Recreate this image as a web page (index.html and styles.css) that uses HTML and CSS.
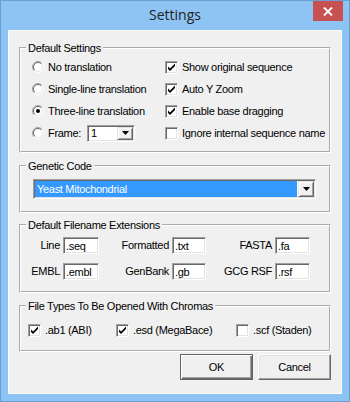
FILE: index.html
```html
<!DOCTYPE html>
<html lang="en">
<head>
    <meta charset="UTF-8">
    <title>Settings</title>
    <link rel="stylesheet" href="styles.css">
</head>
<body>
    <svg class="defs" width="0" height="0">
        <symbol id="radio" viewBox="0 0 12 12">
            <circle cx="6" cy="6" r="5" fill="#fff"/>
            <path d="M2.1 9.9 A5.5 5.5 0 0 1 9.9 2.1" fill="none" stroke="#a0a0a0"/>
            <path d="M9.9 2.1 A5.5 5.5 0 0 1 2.1 9.9" fill="none" stroke="#fff"/>
            <path d="M2.8 9.2 A4.5 4.5 0 0 1 9.2 2.8" fill="none" stroke="#696969"/>
            <path d="M9.2 2.8 A4.5 4.5 0 0 1 2.8 9.2" fill="none" stroke="#e3e3e3"/>
        </symbol>
        <symbol id="tick" viewBox="0 0 13 13">
            <polygon points="3,5.5 5,7.5 10,2.5 10,5 5,10 3,8" fill="#000"/>
        </symbol>
        <symbol id="arrow" viewBox="0 0 7 4">
            <polygon points="0,0 7,0 3.5,4" fill="#000"/>
        </symbol>
    </svg>

    <div class="window">
        <div class="titlebar">
            <span class="title">Settings</span>
            <span class="close">
                <svg width="10" height="9" viewBox="0 0 10 9"><path d="M1 0.5 L9 8.5 M9 0.5 L1 8.5" stroke="#fff" stroke-width="1.8"/></svg>
            </span>
        </div>

        <div class="client">
            <fieldset class="group">
                <legend>Default Settings</legend>
                <div class="defaults">
                    <div class="opt"><span class="radio"><svg><use href="#radio"/></svg></span>No translation</div>
                    <div class="opt"><span class="check"><svg><use href="#tick"/></svg></span>Show original sequence</div>
                    <div class="opt"><span class="radio"><svg><use href="#radio"/></svg></span>Single-line translation</div>
                    <div class="opt"><span class="check"><svg><use href="#tick"/></svg></span>Auto Y Zoom</div>
                    <div class="opt"><span class="radio on"><svg><use href="#radio"/></svg></span>Three-line translation</div>
                    <div class="opt"><span class="check"><svg><use href="#tick"/></svg></span>Enable base dragging</div>
                    <div class="opt">
                        <span class="radio"><svg><use href="#radio"/></svg></span>Frame:
                        <span class="combo sunken frame">
                            <span class="value">1</span>
                            <span class="drop"><svg><use href="#arrow"/></svg></span>
                        </span>
                    </div>
                    <div class="opt"><span class="check"></span>Ignore internal sequence name</div>
                </div>
            </fieldset>

            <fieldset class="group code-group">
                <legend>Genetic Code</legend>
                <div class="code">
                    <span class="combo sunken wide">
                        <span class="value selected">Yeast Mitochondrial</span>
                        <span class="drop"><svg><use href="#arrow"/></svg></span>
                    </span>
                </div>
            </fieldset>

            <fieldset class="group ext-group">
                <legend>Default Filename Extensions</legend>
                <div class="ext">
                    <label>Line</label><input class="sunken" value=".seq">
                    <label>Formatted</label><input class="sunken" value=".txt">
                    <label>FASTA</label><input class="sunken" value=".fa">
                    <label>EMBL</label><input class="sunken" value=".embl">
                    <label>GenBank</label><input class="sunken" value=".gb">
                    <label>GCG RSF</label><input class="sunken" value=".rsf">
                </div>
            </fieldset>

            <fieldset class="group types-group">
                <legend>File Types To Be Opened With Chromas</legend>
                <div class="types">
                    <div class="opt"><span class="check"><svg><use href="#tick"/></svg></span>.ab1 (ABI)</div>
                    <div class="opt"><span class="check"><svg><use href="#tick"/></svg></span>.esd (MegaBace)</div>
                    <div class="opt"><span class="check"></span>.scf (Staden)</div>
                </div>
            </fieldset>

            <div class="buttons">
                <button class="btn default">OK</button>
                <button class="btn">Cancel</button>
            </div>
        </div>
    </div>
</body>
</html>
```

FILE: styles.css
```css
*{
    box-sizing: border-box;
}
body{
    margin: 0;
    background: #fff;
}
.defs{
    position: absolute;
}
.window{
    width: 350px;
    height: 402px;
    background: #8dc4f4;
    border: 1px solid #6b9fd3;
    display: flex;
    flex-direction: column;
    font-family: "Liberation Sans", Arial, sans-serif;
    font-size: 11px;
    letter-spacing: -0.3px;
    color: #000;
}
.titlebar{
    height: 29px;
    flex-shrink: 0;
    display: flex;
    align-items: flex-start;
}
.title{
    flex: 1;
    padding-left: 36px;
    text-align: center;
    font-family: "Open Sans", sans-serif;
    font-size: 14px;
    letter-spacing: 0;
    line-height: 28px;
    color: #222;
}
.close{
    width: 30px;
    height: 20px;
    margin-right: 6px;
    background: #c75050;
    display: flex;
    align-items: center;
    justify-content: center;
}
.client{
    height: 364px;
    margin: 0 7px;
    background: #f0f0f0;
    border: 1px solid #fafafa;
    padding: 10px 10px 0;
}

/* group boxes */
.group{
    margin: 0;
    padding: 0;
    min-width: 0;
    border: 2px groove #fff;
}
.group legend{
    margin-left: 5px;
    padding: 0 2px;
    line-height: 14px;
}
.code-group{
    margin-top: 6px;
}
.ext-group{
    margin-top: 5px;
}
.types-group{
    margin-top: 6px;
}

/* sunken 3d edge used by edits, combos and check boxes */
.sunken{
    border: 1px solid;
    border-color: #a0a0a0 #fff #fff #a0a0a0;
    box-shadow: inset 1px 1px #696969, inset -1px -1px #e3e3e3;
    background: #fff;
    padding: 1px;
}

.opt{
    display: flex;
    align-items: center;
    white-space: nowrap;
}
.radio{
    width: 12px;
    height: 12px;
    margin-right: 4px;
    position: relative;
}
.radio svg{
    width: 12px;
    height: 12px;
    display: block;
}
.radio.on::after{
    content: "";
    position: absolute;
    left: 4px;
    top: 4px;
    width: 4px;
    height: 4px;
    border-radius: 50%;
    background: #000;
}
.check{
    width: 13px;
    height: 13px;
    margin-right: 4px;
    border: 1px solid;
    border-color: #a0a0a0 #fff #fff #a0a0a0;
    box-shadow: inset 1px 1px #696969, inset -1px -1px #e3e3e3;
    background: #fff;
    flex-shrink: 0;
}
.check svg{
    width: 13px;
    height: 13px;
    display: block;
    margin: -1px 0 0 -1px;
}

.defaults{
    display: grid;
    grid-template-columns: 133px 1fr;
    grid-auto-rows: 22px;
    padding: 1px 0 7px 11px;
}

/* combo boxes */
.combo{
    display: flex;
}
.combo .value{
    flex: 1;
    padding-left: 2px;
    line-height: 13px;
}
.combo .drop{
    width: 16px;
    background: #f0f0f0;
    border: 1px solid;
    border-color: #e3e3e3 #696969 #696969 #e3e3e3;
    box-shadow: inset 1px 1px #fff, inset -1px -1px #a0a0a0;
    display: flex;
    align-items: center;
    justify-content: center;
}
.drop svg{
    width: 7px;
    height: 4px;
}
.frame{
    width: 48px;
    height: 17px;
    margin-left: 6px;
}
.code{
    padding: 6px 13px 12px 12px;
}
.wide{
    height: 20px;
}
.wide .value{
    line-height: 16px;
}
.selected{
    margin-right: 1px;
    background: #3399ff;
    color: #fff;
}

/* extensions */
.ext{
    display: grid;
    grid-template-columns: 39px 36px 67px 34px 63px 35px;
    grid-auto-rows: 17px;
    column-gap: 3px;
    row-gap: 9px;
    padding: 5px 0 11px;
}
.ext label{
    text-align: right;
    line-height: 17px;
}
.ext input{
    width: 100%;
    height: 17px;
    margin: 0;
    padding: 1px 2px;
    font: inherit;
    letter-spacing: inherit;
    color: #000;
    outline: none;
}

.types{
    display: grid;
    grid-template-columns: 88px 120px 1fr;
    grid-auto-rows: 16px;
    padding: 9px 0 12px 7px;
}

.buttons{
    display: flex;
    justify-content: flex-end;
    gap: 5px;
    margin-top: 2px;
}
.btn{
    width: 73px;
    height: 26px;
    margin: 0;
    padding: 0;
    font: inherit;
    letter-spacing: inherit;
    color: #000;
    background: #f0f0f0;
    border: 1px solid;
    border-color: #fff #696969 #696969 #fff;
    box-shadow: inset -1px -1px #a0a0a0, inset 1px 1px #e3e3e3;
}
.btn.default{
    border-color: #646464;
    box-shadow: inset 1px 1px #fff, inset -1px -1px #696969, inset -2px -2px #a0a0a0;
}
```
